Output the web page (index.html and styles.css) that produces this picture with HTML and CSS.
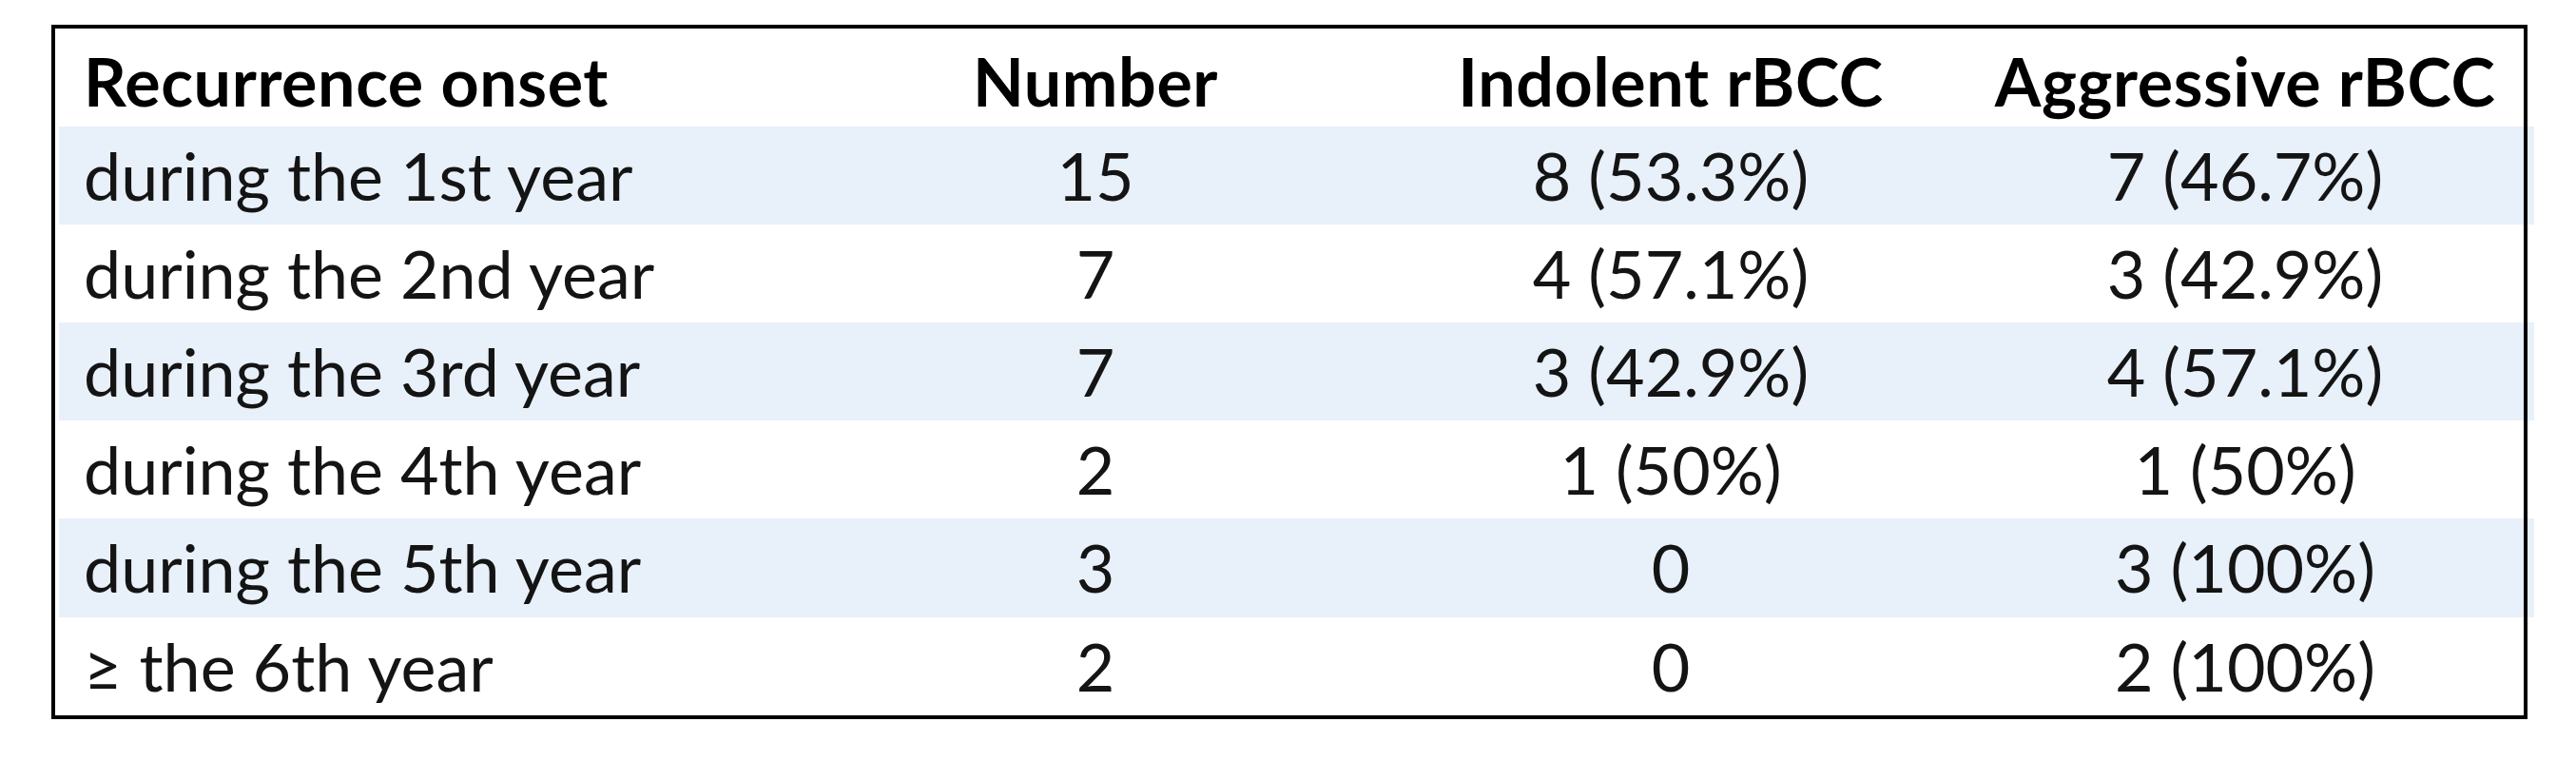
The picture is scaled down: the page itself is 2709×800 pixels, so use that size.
FILE: index.html
```html
<!DOCTYPE html>
<html lang="en">
<head>
<meta charset="utf-8">
<title>Recurrence onset</title>
<link rel="stylesheet" href="styles.css">
</head>
<body>
<div class="frame">
  <table class="tbl">
    <colgroup>
      <col class="c1"><col class="c2"><col class="c3"><col class="c4">
    </colgroup>
    <thead>
      <tr class="head">
        <th class="first">Recurrence onset</th>
        <th>Number</th>
        <th>Indolent rBCC</th>
        <th class="last">Aggressive rBCC</th>
      </tr>
    </thead>
    <tbody>
      <tr class="band"><td class="first">during the 1st year</td><td>15</td><td>8 (53.3%)</td><td class="last">7 (46.7%)</td></tr>
      <tr><td class="first">during the 2nd year</td><td>7</td><td>4 (57.1%)</td><td class="last">3 (42.9%)</td></tr>
      <tr class="band"><td class="first">during the 3rd year</td><td>7</td><td>3 (42.9%)</td><td class="last">4 (57.1%)</td></tr>
      <tr><td class="first">during the 4th year</td><td>2</td><td>1 (50%)</td><td class="last">1 (50%)</td></tr>
      <tr class="band"><td class="first">during the 5th year</td><td>3</td><td>0</td><td class="last">3 (100%)</td></tr>
      <tr><td class="first">&ge; the 6th year</td><td>2</td><td>0</td><td class="last">2 (100%)</td></tr>
    </tbody>
  </table>
</div>
</body>
</html>
```

FILE: styles.css
```css
html, body {
  margin: 0;
  padding: 0;
  background: #ffffff;
}

body {
  font-family: Lato, "Open Sans", "Liberation Sans", sans-serif;
  color: #141414;
}

.frame {
  position: relative;
  margin: 26px 0 0 54px;
  width: 2604px;
  box-sizing: border-box;
  padding: 4px 0;
}

.frame::after {
  content: "";
  position: absolute;
  inset: 0;
  border: 4px solid #000000;
  pointer-events: none;
}

.tbl {
  border-collapse: collapse;
  border-spacing: 0;
  table-layout: fixed;
  width: 2603px;
  margin-left: 8px;
  font-size: 70px;
}

.c1 { width: 796px; }
.c2 { width: 588px; }
.c3 { width: 622px; }
.c4 { width: 597px; }

.tbl th,
.tbl td {
  height: 103.1px;
  padding: 0;
  line-height: 103.1px;
  text-align: center;
  white-space: nowrap;
  vertical-align: top;
}

.tbl th {
  height: 95.1px;
  padding-top: 8px;
  line-height: 95.1px;
  font-weight: 700;
  letter-spacing: 0.6px;
  color: #000000;
}

.tbl .first {
  text-align: left;
  padding-left: 26px;
}

.tbl .last {
  padding-right: 11px;
}

.band {
  background: #e8f0fa;
}
```
